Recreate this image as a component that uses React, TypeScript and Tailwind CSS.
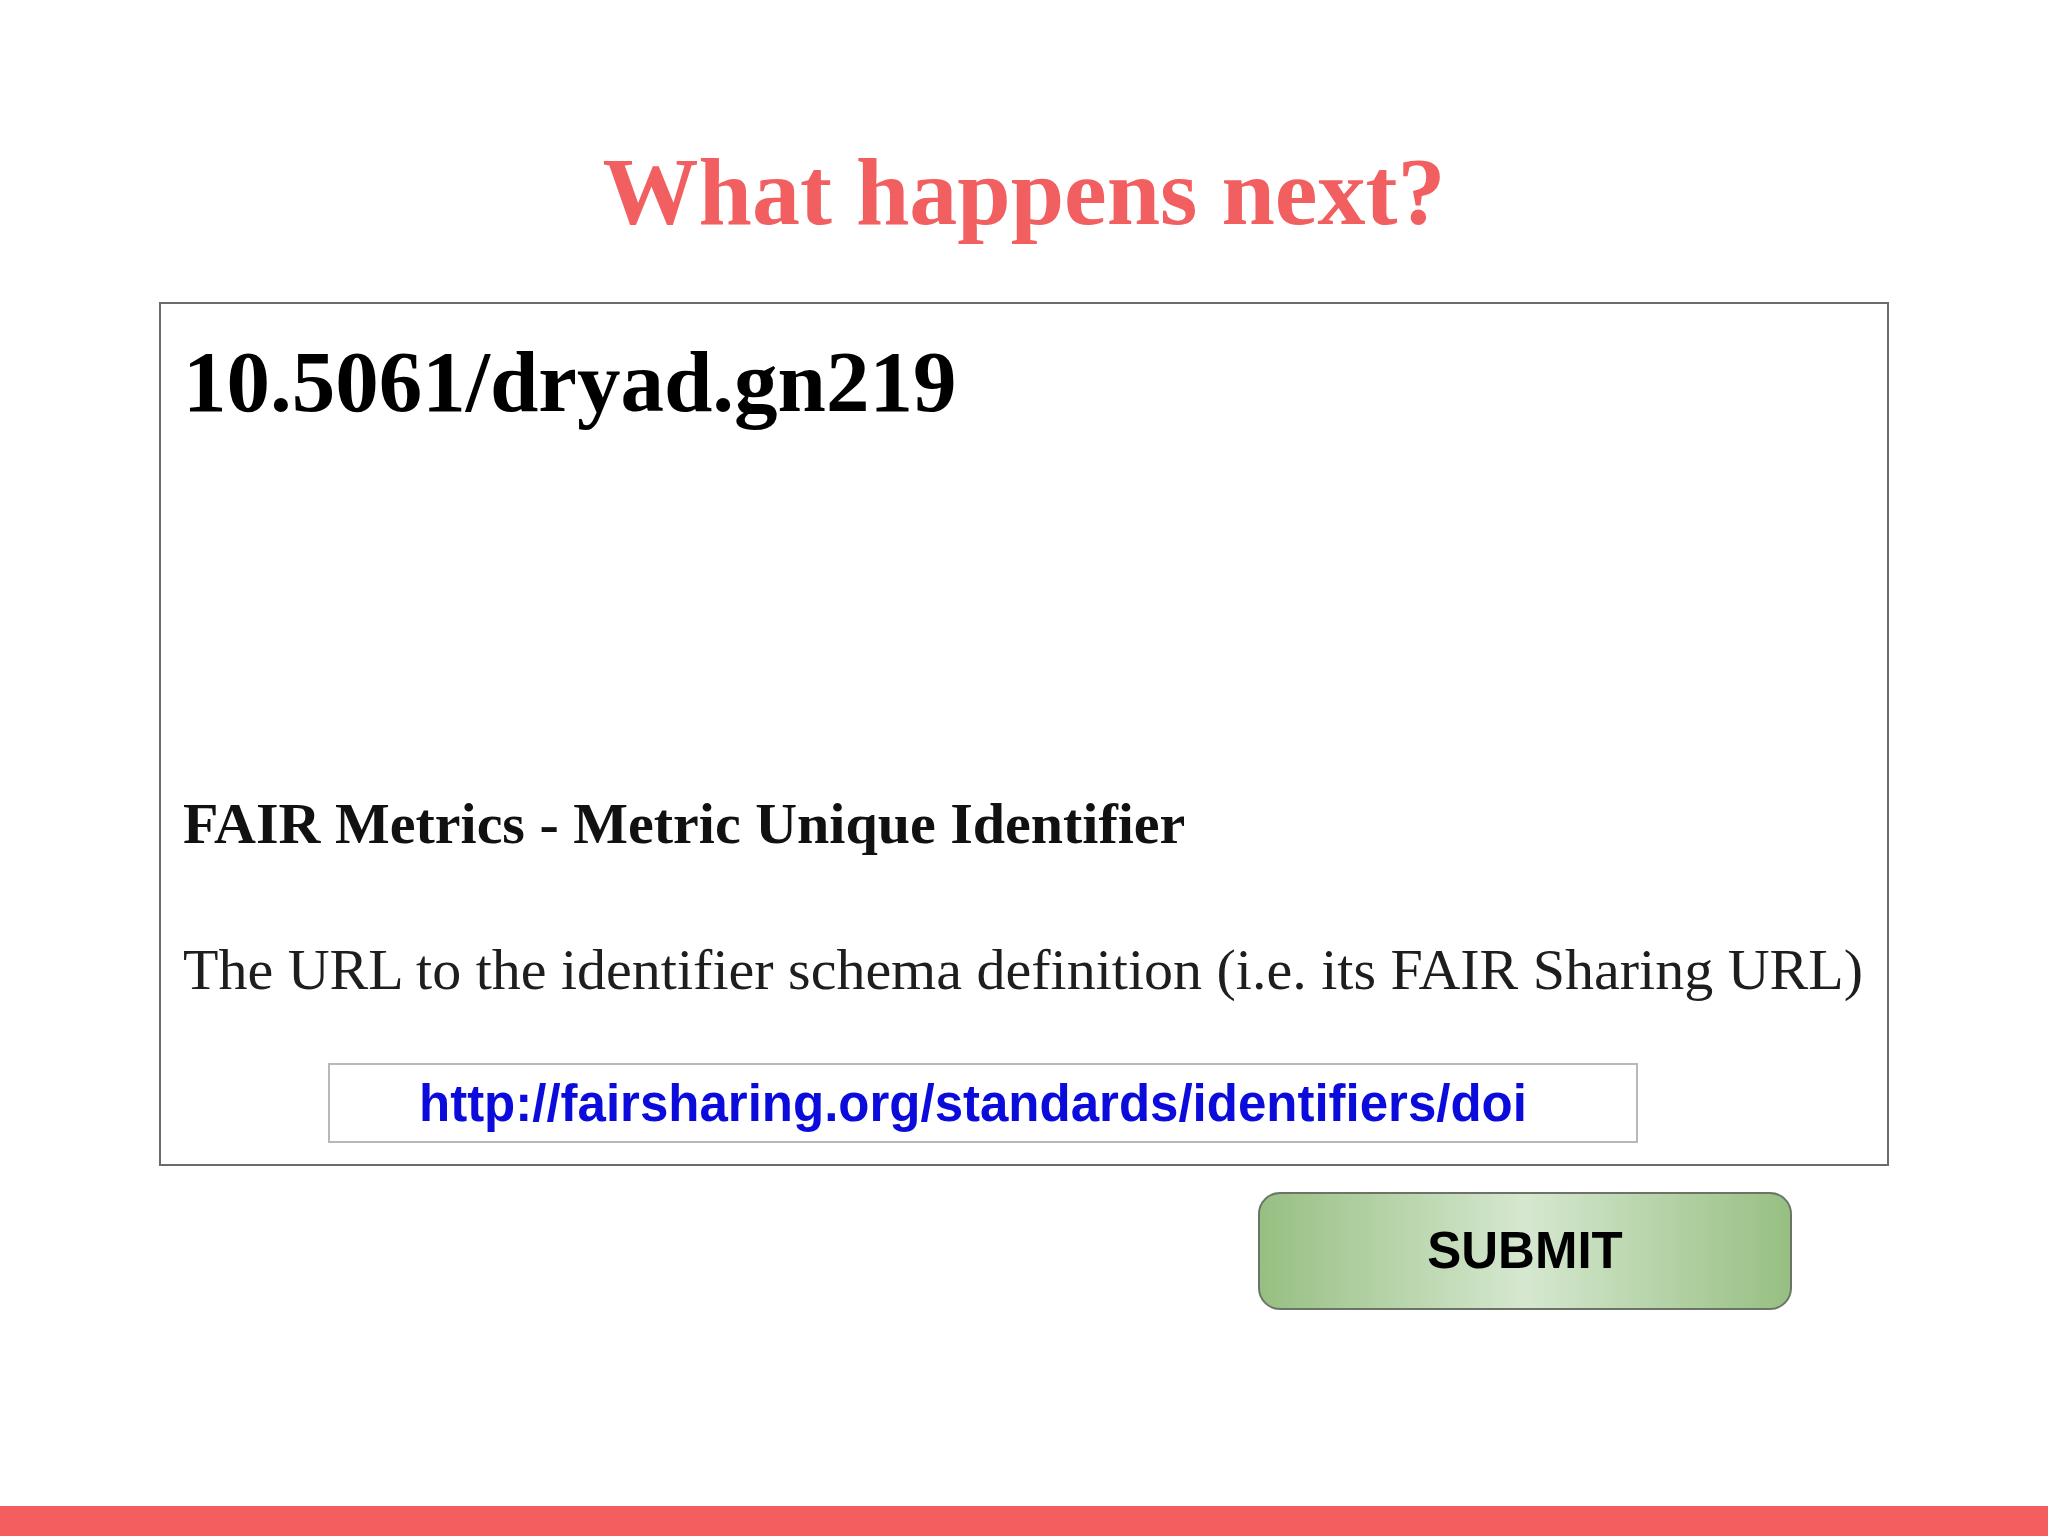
import React from "react";

const App: React.FC = () => {
  return (
    <div className="min-h-screen w-full bg-white flex flex-col">
      <h1 className="mt-[144px] text-center font-['Liberation_Serif',serif] text-[96px] leading-none font-bold text-[#f25f61]">
        What happens next?
      </h1>

      <div className="mt-[62px] ml-[159px] w-[1730px] border-2 border-[#6b6b6b] pt-[34px] pb-[21px] pl-[22px] font-['Liberation_Serif',serif]">
        <h2 className="text-[87px] leading-none font-bold text-black">10.5061/dryad.gn219</h2>
        <h3 className="mt-[370px] text-[58px] leading-none font-bold text-[#111]">
          FAIR Metrics - Metric Unique Identifier
        </h3>
        <p className="mt-[88px] text-[58px] leading-none text-[#1e1e1e]">
          The URL to the identifier schema definition (i.e. its FAIR Sharing URL)
        </p>
        <div className="mt-[64px] ml-[145px] w-[1310px] h-[80px] border-2 border-[#b8b8b8] pl-[89px] pt-[13px]">
          <span className="font-['Liberation_Sans',Arial,sans-serif] text-[51px] leading-none font-bold text-[#0b0bdc]">
            http://fairsharing.org/standards/identifiers/doi
          </span>
        </div>
      </div>

      <div className="mt-[26px] ml-[1258px]">
        <button
          type="button"
          className="w-[534px] h-[118px] rounded-[22px] border-2 border-[#6a7568] bg-linear-to-r from-[#97bf82] via-[#d6e8d0] to-[#97bf82] flex items-center justify-center font-['Liberation_Sans',Arial,sans-serif] text-[51px] font-bold text-black"
        >
          SUBMIT
        </button>
      </div>

      <div className="mt-auto h-[30px] w-full bg-[#f45e5f]" />
    </div>
  );
};

export default App;
